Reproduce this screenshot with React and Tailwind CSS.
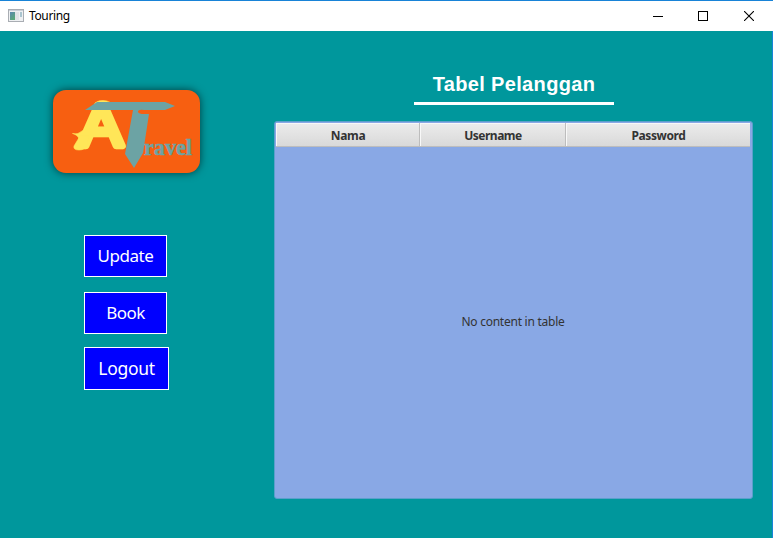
import React from 'react';

function TitleBar() {
  return (
    <header className="flex h-[31px] shrink-0 items-center border-t border-[#1883d7] bg-white pl-2">
      <svg width="16" height="14" viewBox="0 0 16 14" shapeRendering="crispEdges">
        <defs>
          <linearGradient id="pane" x1="0" y1="0" x2="0.6" y2="1">
            <stop offset="0" stopColor="#5a88b0" />
            <stop offset="1" stopColor="#58a878" />
          </linearGradient>
        </defs>
        <rect x="0.5" y="0.5" width="15" height="12" fill="#eef0f2" stroke="#a9adb3" />
        <rect x="1" y="1" width="14" height="1" fill="#c9ced6" />
        <rect x="2" y="3" width="5" height="8" fill="url(#pane)" />
        <rect x="7" y="3" width="4" height="8" fill="#dfe3e6" />
        <rect x="12" y="3" width="2" height="5" fill="#a9c4cf" />
      </svg>
      <span className="ml-[5px] font-['Noto_Sans',sans-serif] text-[12px] leading-4 tracking-[-0.36px] text-black">Touring</span>
      <div className="ml-auto flex h-full pb-px pr-px">
        <button aria-label="Minimize" className="flex w-[45px] items-center justify-center">
          <svg width="10" height="10" shapeRendering="crispEdges"><path d="M0 5.5h10" stroke="#000" /></svg>
        </button>
        <button aria-label="Maximize" className="flex w-[45px] items-center justify-center">
          <svg width="10" height="10" shapeRendering="crispEdges"><rect x="0.5" y="0.5" width="9" height="9" fill="none" stroke="#000" /></svg>
        </button>
        <button aria-label="Close" className="flex w-[47px] items-center justify-center">
          <svg width="10" height="10"><path d="M0 0L10 10M10 0L0 10" stroke="#000" strokeWidth="1.1" /></svg>
        </button>
      </div>
    </header>
  );
}

function Logo() {
  return (
    <div className="ml-[53px] mt-[59px] h-[83px] w-[147px] rounded-[13px] bg-[#f75f11] shadow-[0_0_9px_rgba(0,0,0,0.6)]">
      <svg width="147" height="83" viewBox="0 0 147 83">
        <g fill="#ffe658" stroke="#ffe658" strokeLinejoin="round">
          <text x="26.5" y="56" textLength="43" lengthAdjust="spacingAndGlyphs" fontFamily="Liberation Sans, sans-serif" fontSize="60" strokeWidth="6.5">A</text>
          <path d="M19.5 43.5Q25 45 29 41Q33 38.5 39 39L36 48L26 49Q25 45 19.500 43.500Z" strokeWidth="0.6" />
          <path d="M41 16Q42 10.500 50 10.500Q58 10.500 60 17Z" strokeWidth="0.6" />
          <path d="M27 46L21 56Q20 60 26 60Q32 60 34 55L36 46Z" strokeWidth="0.6" />
        </g>
        <g fill="#6ca3a4">
          <path d="M32 20L44 12H112L122 16L112 20H91Q85 19 85 22Q86 24 91 24H96L90 63L81 78L72 64L80 20Z" />
          <text x="91" y="64.5" textLength="48" lengthAdjust="spacingAndGlyphs" fontFamily="Liberation Serif, serif" fontWeight="700" fontSize="23" stroke="#6ca3a4" strokeWidth="0.5">ravel</text>
        </g>
      </svg>
    </div>
  );
}

const buttonStyle = "flex items-center justify-center border border-white bg-[#0000ff] font-['Noto_Sans',sans-serif] text-white";

function CustomerTable() {
  const cell = 'flex items-center justify-center border-b border-[#bdbdbd] bg-gradient-to-b from-[#ececec] to-[#d9d9d9] pt-[3px] shadow-[inset_1px_1px_0_#f8f8f8]';
  return (
    <section className="mt-4 flex h-[378px] w-[479px] flex-col rounded-[3px] border border-[#5b9fcb] bg-[#89a8e5] p-px pr-[2px] font-['Noto_Sans',sans-serif] text-[12px] text-[#333]">
      <div className="grid h-[24px] shrink-0 grid-cols-[144px_146px_184px] font-bold">
        <div className={`${cell} border-r`}><span className="pl-px tracking-[-0.35px]">Nama</span></div>
        <div className={`${cell} border-r`}><span className="pl-px tracking-[-0.5px]">Username</span></div>
        <div className={cell}><span className="pl-px tracking-[-0.4px]">Password</span></div>
      </div>
      <div className="flex flex-1 items-center justify-center">
        <span className="tracking-[-0.25px]">No content in table</span>
      </div>
    </section>
  );
}

export default function App() {
  return (
    <main className="flex h-[538px] w-[773px] flex-col overflow-hidden bg-[#00979c]">
      <TitleBar />
      <div className="flex flex-1 border-r border-[#1883d7]">
        <aside className="w-[274px] shrink-0">
          <Logo />
          <nav className="ml-[84px] mt-[62px] flex flex-col items-start">
            <button className={`${buttonStyle} h-[42px] w-[83px] text-[17px] tracking-[-0.45px]`}>Update</button>
            <button className={`${buttonStyle} mt-[15px] h-[42px] w-[83px] text-[17px] tracking-[-0.5px]`}>Book</button>
            <button className={`${buttonStyle} mt-[13px] h-[43px] w-[85px] text-[17.5px] tracking-[-0.3px]`}>Logout</button>
          </nav>
        </aside>
        <div className="flex flex-col">
          <div className="ml-[140px] mt-[41px] flex h-[33px] w-[200px] flex-col border-b-[3px] border-white text-center">
            <h1 className="whitespace-nowrap font-['Liberation_Sans',Arial,sans-serif] text-[20px] font-bold leading-6 tracking-[0.35px] text-white">Tabel Pelanggan</h1>
          </div>
          <CustomerTable />
        </div>
      </div>
    </main>
  );
}
